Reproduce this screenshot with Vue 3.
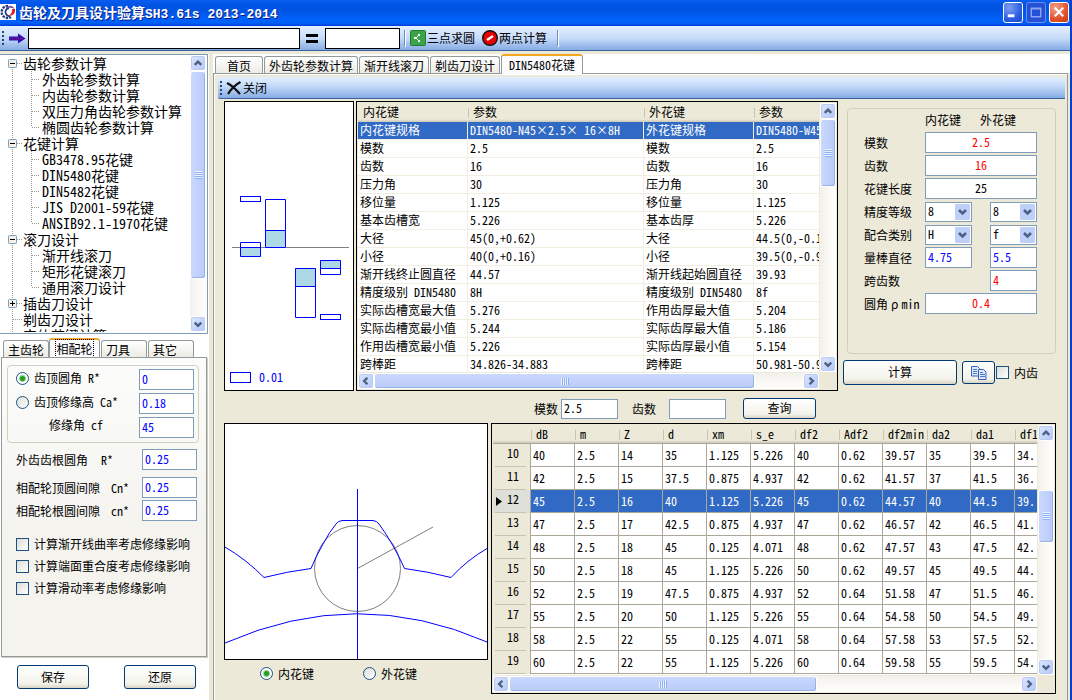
<script setup>
import { h, ref } from 'vue'

// 滚动条:before / size / after 为滑块前、滑块、滑块后的比例
const arrows = {
  up: 'M4 9.5 L7.5 6 L11 9.5',
  down: 'M4 6 L7.5 9.5 L11 6',
  left: 'M9 4 L5.5 7.5 L9 11',
  right: 'M6 4 L9.5 7.5 L6 11'
}

const ScrollButton = (props) => h('button', { class: 'sb-button', type: 'button', 'aria-label': props.to }, [
  h('svg', { viewBox: '0 0 15 15', width: 15, height: 15 }, [
    h('path', { d: arrows[props.to], fill: 'none', stroke: '#4d6185', 'stroke-width': 2.6 })
  ])
])
ScrollButton.props = ['to']

const ScrollBar = (props) => h('div', { class: ['sb', props.vertical ? 'sb-v' : 'sb-h'] }, [
  h(ScrollButton, { to: props.vertical ? 'up' : 'left' }),
  h('div', { class: 'sb-track' }, [
    h('span', { style: { flexGrow: props.before } }),
    h('span', { class: 'sb-thumb', style: { flexGrow: props.size } }, [h('i', { class: 'sb-grip' })]),
    h('span', { style: { flexGrow: props.after } })
  ]),
  h(ScrollButton, { to: props.vertical ? 'down' : 'right' })
])
ScrollBar.props = { vertical: Boolean, before: Number, size: Number, after: Number }

// 左侧导航树
const tree = [
  { name: '齿轮参数计算', sign: '-', items: ['外齿轮参数计算', '内齿轮参数计算', '双压力角齿轮参数计算', '椭圆齿轮参数计算'] },
  { name: '花键计算', sign: '-', items: ['GB3478.95花键', 'DIN5480花键', 'DIN5482花键', 'JIS D2001-59花键', 'ANSIB92.1-1970花键'] },
  { name: '滚刀设计', sign: '-', items: ['渐开线滚刀', '矩形花键滚刀', '通用滚刀设计'] },
  { name: '插齿刀设计', sign: '+', items: [] },
  { name: '剃齿刀设计', sign: '', items: [] },
  { name: '实体花键计算', sign: '', items: [] }
]

const sideTabs = ['主齿轮', '相配轮', '刀具', '其它']
const pageTabs = ['首页', '外齿轮参数计算', '渐开线滚刀', '剃齿刀设计', 'DIN5480花键']

const tipMode = ref('r')
const tip = ref({ r: '0', ca: '0.18', cf: '45' })
const clearances = ref([
  { id: 'root', label: '外齿齿根圆角', sym: 'R*', value: '0.25' },
  { id: 'top', label: '相配轮顶圆间隙', sym: 'Cn*', value: '0.25' },
  { id: 'bottom', label: '相配轮根圆间隙', sym: 'cn*', value: '0.25' }
])
const checks = ['计算渐开线曲率考虑修缘影响', '计算端面重合度考虑修缘影响', '计算滑动率考虑修缘影响']

const params = [
  ['内花键规格', 'DIN5480-N45×2.5× 16×8H', '外花键规格', 'DIN5480-W45×2.5× 16×8f'],
  ['模数', '2.5', '模数', '2.5'],
  ['齿数', '16', '齿数', '16'],
  ['压力角', '30', '压力角', '30'],
  ['移位量', '1.125', '移位量', '1.125'],
  ['基本齿槽宽', '5.226', '基本齿厚', '5.226'],
  ['大径', '45(0,+0.62)', '大径', '44.5(0,-0.16)'],
  ['小径', '40(0,+0.16)', '小径', '39.5(0,-0.95)'],
  ['渐开线终止圆直径', '44.57', '渐开线起始圆直径', '39.93'],
  ['精度级别 DIN5480', '8H', '精度级别 DIN5480', '8f'],
  ['实际齿槽宽最大值', '5.276', '作用齿厚最大值', '5.204'],
  ['实际齿槽宽最小值', '5.244', '实际齿厚最大值', '5.186'],
  ['作用齿槽宽最小值', '5.226', '实际齿厚最小值', '5.154'],
  ['跨棒距', '34.826-34.883', '跨棒距', '50.981-50.935']
]

const columns = ['dB', 'm', 'Z', 'd', 'xm', 's_e', 'df2', 'Adf2', 'df2min', 'da2', 'da1', 'df1']
const splines = [
  [10, '40', '2.5', '14', '35', '1.125', '5.226', '40', '0.62', '39.57', '35', '39.5', '34.'],
  [11, '42', '2.5', '15', '37.5', '0.875', '4.937', '42', '0.62', '41.57', '37', '41.5', '36.'],
  [12, '45', '2.5', '16', '40', '1.125', '5.226', '45', '0.62', '44.57', '40', '44.5', '39.'],
  [13, '47', '2.5', '17', '42.5', '0.875', '4.937', '47', '0.62', '46.57', '42', '46.5', '41.'],
  [14, '48', '2.5', '18', '45', '0.125', '4.071', '48', '0.62', '47.57', '43', '47.5', '42.'],
  [15, '50', '2.5', '18', '45', '1.125', '5.226', '50', '0.62', '49.57', '45', '49.5', '44.'],
  [16, '52', '2.5', '19', '47.5', '0.875', '4.937', '52', '0.64', '51.58', '47', '51.5', '46.'],
  [17, '55', '2.5', '20', '50', '1.125', '5.226', '55', '0.64', '54.58', '50', '54.5', '49.'],
  [18, '58', '2.5', '22', '55', '0.125', '4.071', '58', '0.64', '57.58', '53', '57.5', '52.'],
  [19, '60', '2.5', '22', '55', '1.125', '5.226', '60', '0.64', '59.58', '55', '59.5', '54.']
]
const selected = ref(12)

const form = ref({ m: '2.5', z: '16', len: '25', gradeIn: '8', gradeOut: '8', fitIn: 'H', fitOut: 'f', pinIn: '4.75', pinOut: '5.5', span: '4', rho: '0.4' })
const query = ref({ m: '2.5', z: '' })
const view = ref('in')
</script>

<template>
  <div class="window">
    <header class="titlebar">
      <svg class="logo" viewBox="0 0 16 16">
        <rect width="16" height="16" fill="#fff" />
        <path d="M8 2 A6 6 0 1 0 11 13" fill="none" stroke="#1d3f86" stroke-width="2.4" stroke-dasharray="2.4 1" />
        <path d="M9 4 A4 4 0 1 0 10 12" fill="none" stroke="#1d3f86" stroke-width="1.8" />
        <path d="M6 4 Q11 -1 15 5 Q11 3 6 4 Z" fill="#7a4a9c" />
        <path d="M15 5 Q16 12 8 12 Q13 9 12 5 Z" fill="#d8232a" />
      </svg>
      <h1>齿轮及刀具设计验算<span>SH3.61s 2013-2014</span></h1>
      <button class="win-btn" type="button" aria-label="最小化">
        <svg viewBox="0 0 19 19"><rect x="4" y="12" width="7" height="3" fill="#fff" /></svg>
      </button>
      <button class="win-btn dim" type="button" aria-label="最大化">
        <svg viewBox="0 0 19 19"><path d="M4.5 5.5 h10 v9 h-10 Z M4 6 h11" fill="none" stroke="#8ba4ec" stroke-width="1.5" /></svg>
      </button>
      <button class="win-btn close" type="button" aria-label="关闭窗口">
        <svg viewBox="0 0 19 19"><path d="M5 5 L14 14 M14 5 L5 14" stroke="#fff" stroke-width="2.2" /></svg>
      </button>
    </header>

    <div class="toolbar">
      <i class="grip"></i>
      <svg class="go" viewBox="0 0 17 11">
        <path d="M0 3.5 H9 V0.5 L16.5 5.5 L9 10.5 V7.5 H0 Z" fill="#2a10b8" />
        <path d="M1 5.5 H14" stroke="#9c1060" stroke-width="2" stroke-dasharray="1 1" />
      </svg>
      <input class="expr" type="text" aria-label="表达式">
      <svg class="equal" viewBox="0 0 12 9"><path d="M0 1.5 H12 M0 7.5 H12" stroke="#000" stroke-width="3" /></svg>
      <input class="result" type="text" aria-label="结果">
      <i class="sep"></i>
      <button class="tool" type="button">
        <svg viewBox="0 0 16 16">
          <rect x="0.5" y="0.5" width="15" height="15" rx="1" fill="#3ba44a" stroke="#237a31" />
          <path d="M4 7 h3 v2 h-3 Z M8 4 h2 v2 h-2 Z M8 10 h2 v2 h-2 Z M7 6 h1 v1 h-1 Z M7 9 h1 v1 h-1 Z" fill="#fff" />
        </svg>三点求圆
      </button>
      <button class="tool" type="button">
        <svg viewBox="0 0 16 16">
          <circle cx="8" cy="8" r="7.3" fill="#e80000" stroke="#111" stroke-width="1.4" />
          <path d="M5 10 L11 6" stroke="#fff" stroke-width="2.5" />
        </svg>两点计算
      </button>
      <i class="sep"></i>
    </div>

    <div class="body">
      <aside class="side">
        <nav class="tree">
          <ul>
            <template v-for="(group, g) in tree" :key="group.name">
              <li class="branch">
                <span class="gutter" :class="{ first: g === 0 }">
                  <button v-if="group.sign" type="button" :aria-label="group.name">
                    <svg viewBox="0 0 9 9">
                      <rect x="0.5" y="0.5" width="8" height="8" rx="1" fill="#f4f2ec" stroke="#7f9db9" />
                      <path :d="group.sign === '+' ? 'M2 4.5 H7 M4.5 2 V7' : 'M2 4.5 H7'" stroke="#000" />
                    </svg>
                  </button>
                </span>{{ group.name }}
              </li>
              <li v-for="(item, i) in group.items" :key="item" class="twig">
                <span class="gutter" :class="{ last: i === group.items.length - 1 }"></span>{{ item }}
              </li>
            </template>
          </ul>
          <ScrollBar vertical :before="0" :size="205" :after="37" />
        </nav>

        <div class="side-tabs">
          <button v-for="(tab, i) in sideTabs" :key="tab" type="button" class="tab" :class="{ active: i === 1 }"><span>{{ tab }}</span></button>
        </div>
        <section class="side-page">
          <div class="tip-box">
            <label class="pick"><input v-model="tipMode" type="radio" value="r">齿顶圆角 R*</label>
            <input v-model="tip.r" type="text" aria-label="齿顶圆角">
            <label class="pick"><input v-model="tipMode" type="radio" value="ca">齿顶修缘高 Ca*</label>
            <input v-model="tip.ca" type="text" aria-label="齿顶修缘高">
            <label class="indent" for="cf">修缘角 cf</label>
            <input id="cf" v-model="tip.cf" type="text">
          </div>
          <div class="clearances">
            <div v-for="c in clearances" :key="c.id" class="clearance" :class="c.id">
              <label :for="c.id">{{ c.label }}</label>
              <span>{{ c.sym }}</span>
              <input :id="c.id" v-model="c.value" type="text">
            </div>
          </div>
          <div class="checks">
            <label v-for="c in checks" :key="c"><input type="checkbox">{{ c }}</label>
          </div>
        </section>
        <div class="side-actions">
          <button class="btn" type="button">保存</button>
          <button class="btn" type="button">还原</button>
        </div>
      </aside>

      <main class="main">
        <div class="page-tabs">
          <button v-for="(tab, i) in pageTabs" :key="tab" type="button" class="tab" :class="{ active: i === 4 }"><span>{{ tab }}</span></button>
        </div>
        <div class="page">
          <div class="page-bar">
            <i class="grip"></i>
            <button class="tool" type="button">
              <svg viewBox="0 0 16 16"><path d="M1 3 Q7 6 14 14 M14.5 2 Q7 6 2 14" fill="none" stroke="#111" stroke-width="2.2" /></svg>关闭
            </button>
          </div>

          <div class="upper">
            <svg class="canvas zones" viewBox="0 0 128 288">
              <path d="M7 145.500 H124" stroke="#808080" />
              <g fill="#add8e6">
                <rect x="40" y="128" width="21" height="18" />
                <rect x="15" y="145" width="21" height="10" />
                <rect x="70" y="166" width="21" height="19" />
                <rect x="95" y="158" width="21" height="9" />
              </g>
              <g fill="none" stroke="#0000ff">
                <rect x="15.5" y="94.5" width="20" height="5" />
                <path d="M40.5 97.5 h20 v48 h-20 Z M40.5 128.5 h20" />
                <path d="M15.5 140.5 h20 v14 h-20 Z M15.5 145.5 h20" />
                <path d="M70.5 166.5 h20 v49 h-20 Z M70.5 184.5 h20" />
                <path d="M95.5 158.5 h20 v14 h-20 Z M95.5 166.5 h20" />
                <rect x="95.5" y="212.5" width="20" height="5" />
                <rect x="5.5" y="270.5" width="20" height="10" />
              </g>
              <text x="34" y="280">0.01</text>
            </svg>

            <div class="grid param-grid">
              <div class="viewport">
                <table>
                  <colgroup><col class="name"><col class="value"><col class="name"><col class="value"></colgroup>
                  <thead><tr><th>内花键</th><th>参数</th><th>外花键</th><th>参数</th></tr></thead>
                  <tbody>
                    <tr v-for="(row, r) in params" :key="r" :class="{ on: r === 0 }">
                      <td v-for="(cell, i) in row" :key="i">{{ cell }}</td>
                    </tr>
                  </tbody>
                </table>
              </div>
              <ScrollBar vertical :before="0" :size="66" :after="170" />
              <ScrollBar :before="0" :size="382" :after="48" />
            </div>

            <div class="inputs">
              <div class="form">
                <div class="head"><span>内花键</span><span>外花键</span></div>
                <label for="f-m">模数</label><input id="f-m" v-model="form.m" class="wide red" type="text">
                <label for="f-z">齿数</label><input id="f-z" v-model="form.z" class="wide red" type="text">
                <label for="f-len">花键长度</label><input id="f-len" v-model="form.len" class="wide black" type="text">
                <label for="f-grade">精度等级</label>
                <span class="combo">
                  <select id="f-grade" v-model="form.gradeIn"><option>7</option><option>8</option></select>
                  <svg viewBox="0 0 15 16"><rect width="15" height="16" rx="1" /><path d="M4 6 L7.5 9.5 L11 6" /></svg>
                </span>
                <span class="combo out">
                  <select v-model="form.gradeOut" aria-label="外花键精度等级"><option>7</option><option>8</option></select>
                  <svg viewBox="0 0 15 16"><rect width="15" height="16" rx="1" /><path d="M4 6 L7.5 9.5 L11 6" /></svg>
                </span>
                <label for="f-fit">配合类别</label>
                <span class="combo">
                  <select id="f-fit" v-model="form.fitIn"><option>H</option><option>G</option></select>
                  <svg viewBox="0 0 15 16"><rect width="15" height="16" rx="1" /><path d="M4 6 L7.5 9.5 L11 6" /></svg>
                </span>
                <span class="combo out">
                  <select v-model="form.fitOut" aria-label="外花键配合类别"><option>f</option><option>h</option></select>
                  <svg viewBox="0 0 15 16"><rect width="15" height="16" rx="1" /><path d="M4 6 L7.5 9.5 L11 6" /></svg>
                </span>
                <label for="f-pin">量棒直径</label><input id="f-pin" v-model="form.pinIn" type="text">
                <input v-model="form.pinOut" class="out" type="text" aria-label="外花键量棒直径">
                <label for="f-span">跨齿数</label><input id="f-span" v-model="form.span" class="out red" type="text">
                <label for="f-rho">圆角<i class="rho">ρ</i>min</label><input id="f-rho" v-model="form.rho" class="wide red" type="text">
              </div>
              <div class="form-actions">
                <button class="btn calc" type="button">计算</button>
                <button class="btn copy" type="button" aria-label="复制">
                  <svg viewBox="0 0 16 14">
                    <g stroke="#3a62b8" fill="#dbe8fb">
                      <path d="M0.5 0.5 h6 l2 2 v7.5 h-8 Z" />
                      <path d="M7.5 3.5 h5 l2.5 2.5 v7.5 h-7.5 Z" />
                    </g>
                    <path d="M2 3.5 h4 M2 5.5 h4 M2 7.5 h4 M9 6.5 h3 M9 8.5 h5 M9 10.5 h5" stroke="#4a78cc" />
                  </svg>
                </button>
                <label><input type="checkbox">内齿</label>
              </div>
            </div>
          </div>

          <div class="query">
            <label for="q-m">模数</label><input id="q-m" v-model="query.m" type="text">
            <label for="q-z">齿数</label><input id="q-z" v-model="query.z" type="text">
            <button class="btn" type="button">查询</button>
          </div>

          <div class="lower">
            <div class="profile">
              <svg class="canvas" viewBox="0 0 262 235" preserveAspectRatio="none">
                <g fill="none" stroke="#808080">
                  <circle cx="132.5" cy="144.5" r="43" />
                  <path d="M132.5 144.5 L208 103" />
                </g>
                <g fill="none" stroke="#0000ff">
                  <path d="M0 123 Q22 136 39 153.5 Q62 147.5 86 144.5 Q90 134 98 120 Q105 107 111 100 Q113 97 117 96.5 H148 Q152 97 154 100 Q160 108 167 120 Q174 132 179.5 144.5 Q203 147.5 226 153.5 Q242 136 262 124.5" />
                  <path d="M0 219 Q132 161 262 218" />
                </g>
                <path d="M132.5 65 V235" stroke="#0000ff" />
              </svg>
              <div class="views">
                <label><input v-model="view" type="radio" value="in">内花键</label>
                <label><input v-model="view" type="radio" value="out">外花键</label>
              </div>
            </div>

            <div class="grid spline-grid">
              <div class="viewport">
                <table>
                  <colgroup><col class="no"><col v-for="c in columns" :key="c" class="num"></colgroup>
                  <thead><tr><th></th><th v-for="c in columns" :key="c">{{ c }}</th></tr></thead>
                  <tbody>
                    <tr v-for="row in splines" :key="row[0]" :class="{ on: row[0] === selected }" @click="selected = row[0]">
                      <th scope="row"><div><svg viewBox="0 0 6 9"><path v-if="row[0] === selected" d="M0 0 L6 4.5 L0 9 Z" /></svg>{{ row[0] }}</div></th>
                      <td v-for="(cell, i) in row.slice(1)" :key="i">{{ cell }}</td>
                    </tr>
                  </tbody>
                </table>
              </div>
              <ScrollBar vertical :before="49" :size="51" :after="117" />
              <ScrollBar :before="0" :size="307" :after="205" />
            </div>
          </div>
        </div>
      </main>
    </div>
  </div>
</template>

<style>
body {
  margin: 0;
}

/* 滚动条 */
.sb {
  display: flex;
  background: linear-gradient(90deg, #f3f1ec, #fefefb);
}

.sb-v {
  flex-direction: column;
  width: 16px;
}

.sb-h {
  height: 16px;
  background: linear-gradient(#f3f1ec, #fefefb);
}

.sb-button {
  display: block;
  flex: none;
  width: 16px;
  height: 16px;
  padding: 0;
  border: 1px solid #fff;
  border-radius: 3px;
  background: linear-gradient(135deg, #dce6fe, #b4c8f6);
  box-shadow: inset 0 0 0 1px #b9cbf3;
}

.sb-button svg {
  display: block;
  width: 14px;
  height: 14px;
}

.sb-track {
  display: flex;
  flex: 1;
}

.sb-v .sb-track {
  flex-direction: column;
}

.sb-track > span {
  flex-basis: 0;
}

.sb-thumb {
  display: flex;
  align-items: center;
  justify-content: center;
  box-sizing: border-box;
  border: 1px solid #fff;
  border-radius: 3px;
  background: linear-gradient(90deg, #cad8fd, #b9cbf9);
  box-shadow: inset -1px -1px 0 #98b1e4;
}

.sb-h .sb-thumb {
  background: linear-gradient(#cad8fd, #b9cbf9);
}

.sb-grip {
  width: 7px;
  height: 8px;
  background: repeating-linear-gradient(#eef4fe 0 1px, #8cb0f8 1px 2px);
}

.sb-h .sb-grip {
  width: 8px;
  height: 7px;
  background: repeating-linear-gradient(90deg, #eef4fe 0 1px, #8cb0f8 1px 2px);
}
</style>

<style scoped>
.window {
  display: flex;
  flex-direction: column;
  box-sizing: border-box;
  height: 100vh;
  overflow: hidden;
  border-right: 2px solid #0841c8;
  background: #ece9d8;
  color: #000;
  font: 12px/16px "Noto Sans Mono CJK SC", "Noto Sans CJK SC", monospace;
}

button,
input,
select {
  box-sizing: border-box;
  margin: 0;
  color: inherit;
  font: inherit;
}

input[type="text"] {
  padding: 0 2px 3px;
  border: 1px solid #7f9db9;
  border-radius: 0;
  outline: 0;
  background: #fff;
  color: #0000ff;
}

/* 标题栏 */
.titlebar {
  display: flex;
  align-items: center;
  gap: 3px;
  height: 26px;
  padding: 0 1px 2px 0;
  box-sizing: border-box;
  background: linear-gradient(#0a5cf0, #0054e3 20%, #0055e5 45%, #0062fc 75%, #0061f8 88%, #003dd7);
}

.logo {
  width: 16px;
  height: 16px;
}

h1 {
  flex: 1;
  margin: 0;
  color: #fff;
  font-size: 14px;
  line-height: 20px;
  text-shadow: 1px 1px #0a1883;
}

h1 span {
  font: bold 13px "Liberation Mono", monospace;
}

.win-btn {
  width: 20px;
  height: 21px;
  padding: 0;
  border: 1px solid #fff;
  border-radius: 3px;
  background: radial-gradient(circle at 30% 25%, #7c9ff0, #2b5fe0 60%, #1a46c8);
}

.win-btn svg {
  display: block;
}

.win-btn.dim {
  border-color: #6f8fea;
  background: #2450d8;
}

.win-btn.close {
  background: radial-gradient(circle at 30% 25%, #f0a088, #e2532c 60%, #c83a10);
}

/* 工具条 */
.toolbar {
  display: flex;
  flex: none;
  align-items: center;
  height: 25px;
  margin-bottom: 3px;
  box-sizing: border-box;
  border-bottom: 1px solid #3b619c;
  background: linear-gradient(#e3efff, #c7dcfa 50%, #86abe4);
}

.grip {
  width: 2px;
  height: 14px;
  margin: 0 2px;
  background: repeating-linear-gradient(#274176 0 2px, transparent 2px 4px);
}

.go {
  width: 17px;
  height: 11px;
  margin: 0 2px 0 3px;
}

.toolbar .expr,
.toolbar .result {
  height: 21px;
  border-color: #000;
  color: #000;
}

.expr {
  width: 272px;
}

.result {
  width: 75px;
}

.equal {
  width: 12px;
  height: 9px;
  margin: 0 7px 0 6px;
}

.sep {
  width: 1px;
  height: 16px;
  margin: 0 4px;
  background: #6a8ccb;
  box-shadow: 1px 1px #fff;
}

.tool {
  display: flex;
  align-items: center;
  gap: 1px;
  height: 20px;
  margin-right: 5px;
  padding: 0 1px;
  border: 0;
  background: none;
}

.tool svg {
  width: 16px;
  height: 16px;
}

.body {
  display: flex;
  flex: 1;
  min-height: 0;
}

/* 左侧 */
.side {
  display: flex;
  flex: none;
  flex-direction: column;
  width: 209px;
  background: #fff;
}

.tree {
  display: flex;
  flex: 1;
  min-height: 0;
  margin-right: 1px;
  padding: 0 1px 1px 0;
  border: 1px solid #7f9db9;
  border-left: 0;
}

.tree ul {
  flex: 1;
  margin: 0;
  padding: 0;
  overflow: hidden;
  font-size: 14px;
  line-height: 16px;
  list-style: none;
  white-space: nowrap;
}

.tree li {
  display: flex;
  height: 16px;
}

.gutter {
  flex: none;
  width: 23px;
  background:
    repeating-linear-gradient(#a09c88 0 1px, transparent 1px 2px) 12px 0 / 1px 100% no-repeat,
    repeating-linear-gradient(90deg, #a09c88 0 1px, transparent 1px 2px) 13px 8px / 9px 1px no-repeat;
}

.gutter.first {
  background-position: 12px 8px, 13px 8px;
}

.gutter button {
  display: block;
  width: 9px;
  height: 9px;
  margin: 4px 0 0 8px;
  padding: 0;
  border: 0;
}

.gutter svg {
  display: block;
}

.twig .gutter {
  width: 42px;
  background:
    repeating-linear-gradient(#a09c88 0 1px, transparent 1px 2px) 12px 0 / 1px 100% no-repeat,
    repeating-linear-gradient(#a09c88 0 1px, transparent 1px 2px) 31px 0 / 1px 100% no-repeat,
    repeating-linear-gradient(90deg, #a09c88 0 1px, transparent 1px 2px) 32px 8px / 8px 1px no-repeat;
}

.twig .gutter.last {
  background-size: 1px 100%, 1px 8px, 8px 1px;
}

.tab {
  height: 17px;
  margin-right: 1px;
  padding: 0 4px;
  border: 1px solid #919b9c;
  border-bottom: 0;
  border-radius: 3px 3px 0 0;
  background: linear-gradient(#fff, #ecebe5);
  line-height: 15px;
  white-space: nowrap;
}

.tab.active {
  height: 20px;
  margin-bottom: -1px;
  padding-bottom: 2px;
  border-top: 2px solid #f5a623;
  background: #fcfcfe;
}

.side-tabs {
  display: flex;
  flex: none;
  align-items: flex-end;
  height: 23px;
  padding: 0 3px;
}

.side-tabs .tab {
  width: 46px;
  text-align: left;
}

.side-tabs .tab.active {
  width: 51px;
  margin-left: -1px;
  text-align: center;
}

.side-tabs .active span {
  outline: 1px dotted #000;
}

.side-page {
  flex: none;
  height: 300px;
  margin: 0 2px 0 1px;
  padding: 7px 7px 7px 5px;
  box-sizing: border-box;
  border: 1px solid #919b9c;
  background: linear-gradient(#fcfcfb, #f4f3ee 60%);
  box-shadow: 1px 1px #d0cebf;
}

.side-page input[type="text"] {
  width: 55px;
  height: 21px;
}

.tip-box {
  display: grid;
  grid-template-columns: 1fr 55px;
  gap: 3px;
  padding: 3px 4px 4px 8px;
  border: 1px solid #d0d0bf;
  border-radius: 4px;
}

.pick {
  display: flex;
  align-items: center;
  gap: 5px;
  height: 18px;
  white-space: nowrap;
}

.indent {
  padding-left: 33px;
}

.clearance {
  display: grid;
  grid-template-columns: 84px 1fr 55px;
  align-items: center;
  height: 23px;
  padding: 0 2px 0 9px;
  white-space: nowrap;
}

.clearance span {
  padding-left: 11px;
}

.clearance.root {
  margin: 5px 0;
}

.clearance.root span {
  padding-left: 1px;
}

.checks {
  display: grid;
  gap: 6px;
  padding: 14px 0 0 9px;
}

label input[type="radio"],
label input[type="checkbox"] {
  flex: none;
  width: 13px;
  height: 13px;
  border: 1px solid #1c5180;
  background: linear-gradient(135deg, #dcdcd7, #fff);
  appearance: none;
}

label input[type="radio"] {
  border-radius: 50%;
}

label input[type="radio"]:checked {
  background: radial-gradient(circle, #21a121 0 2px, #fff 4px);
}

.checks label,
.views label,
.form-actions label {
  display: flex;
  align-items: center;
  gap: 5px;
  white-space: nowrap;
}

.btn {
  padding: 0 0 1px;
  border: 1px solid #003c74;
  border-radius: 3px;
  background: linear-gradient(#fff, #f3f2ea 80%, #d9d3c5);
}

.side-actions {
  display: flex;
  flex: none;
  justify-content: space-between;
  padding: 8px 13px 11px 17px;
}

.side-actions .btn {
  width: 72px;
  height: 24px;
}

/* 主区域 */
.main {
  display: flex;
  flex: 1;
  flex-direction: column;
  min-width: 0;
  margin-left: 4px;
}

.page-tabs {
  display: flex;
  flex: none;
  align-items: flex-end;
  height: 19px;
  padding-left: 2px;
  background: #fff;
}

.page-tabs .tab:first-child {
  padding: 0 11px;
}

.page-tabs .tab.active {
  z-index: 1;
  padding: 0 7px 2px;
}

.page {
  display: flex;
  flex: 1;
  flex-direction: column;
  min-height: 0;
  margin-right: 2px;
  padding: 3px 2px 6px 4px;
  border: 1px solid #919b9c;
  border-bottom: 0;
  box-shadow: inset 1px 1px #fff;
}

.page-bar {
  display: flex;
  flex: none;
  align-items: center;
  height: 22px;
  box-sizing: border-box;
  border-bottom: 1px solid #3b619c;
  border-radius: 2px 2px 0 2px;
  background: linear-gradient(#e3efff, #c7dcfa 40%, #86abe4);
}

.page-bar .tool {
  padding-left: 2px;
}

.upper {
  display: flex;
  flex: none;
  gap: 2px;
  height: 290px;
  padding: 2px 7px 0 6px;
}

.canvas {
  box-sizing: border-box;
  border: 1px solid #000;
  background: #fff;
}

.zones {
  flex: none;
  width: 130px;
  height: 290px;
}

.zones text {
  fill: #0000ff;
  font-size: 12px;
}

.grid {
  display: grid;
  flex: 1;
  grid-template: minmax(0, 1fr) 16px / minmax(0, 1fr) 16px;
  gap: 1px;
  box-sizing: border-box;
  min-width: 0;
  padding: 1px;
  border: 1px solid #000;
}

.grid .viewport {
  overflow: hidden;
  background: #fff;
}

.grid table {
  border-collapse: separate;
  border-spacing: 0;
  line-height: 15px;
  table-layout: fixed;
  white-space: nowrap;
}

.grid th,
.grid td {
  box-sizing: border-box;
}

.grid th {
  padding: 0 5px 2px;
  background: linear-gradient(#ece9d8 85%, #cbc7b8);
  font-weight: normal;
  text-align: left;
}

.grid td {
  padding: 0 2px 2px;
  overflow: hidden;
}

.grid thead th + th {
  background:
    linear-gradient(#c7c5b2, #c7c5b2) 0 5px / 1px 10px no-repeat,
    linear-gradient(#ece9d8 85%, #cbc7b8);
}

.grid .on td {
  background: #316ac5;
  color: #fff;
}

.param-grid table {
  width: 572px;
}

.param-grid .name {
  width: 110px;
}

.param-grid .value {
  width: 176px;
}

.param-grid thead th {
  height: 19px;
  padding-bottom: 3px;
}

.param-grid td {
  height: 18px;
  border-right: 1px solid #f1efe2;
  border-bottom: 1px solid #f1efe2;
}

/* 右侧输入 */
.inputs {
  flex: none;
  width: 215px;
  padding-left: 3px;
}

.form {
  display: grid;
  grid-template-columns: 43px 47px 47px;
  grid-template-rows: 22px;
  grid-auto-rows: 23px;
  column-gap: 18px;
  align-items: center;
  height: 246px;
  margin: 7px 2px 0 4px;
  padding: 0 0 0 16px;
  box-sizing: border-box;
  border: 1px solid #d0d0bf;
  border-radius: 4px;
}

.form label {
  white-space: nowrap;
}

.rho {
  padding: 0 3px;
  font-style: normal;
}

.head {
  display: flex;
  grid-column: 2 / 4;
  gap: 19px;
}

.form input {
  grid-column: 2;
  width: 100%;
  height: 21px;
}

.form .wide {
  grid-column: 2 / 4;
  text-align: center;
}

.form .out {
  grid-column: 3;
}

.form .red {
  color: #ff0000;
}

.form .black {
  color: #000;
}

.combo {
  display: grid;
  align-items: center;
}

.combo select {
  grid-area: 1 / 1;
  width: 100%;
  height: 20px;
  padding: 0 2px 1px;
  border: 1px solid #7f9db9;
  border-radius: 0;
  background: #fff;
  appearance: none;
}

.combo svg {
  grid-area: 1 / 1;
  justify-self: end;
  width: 15px;
  height: 16px;
  margin-right: 2px;
  pointer-events: none;
}

.combo rect {
  fill: #bfd0f8;
}

.combo path {
  fill: none;
  stroke: #4d6185;
  stroke-width: 2.6;
}

.form-actions {
  display: flex;
  align-items: center;
  padding-top: 6px;
}

.calc {
  width: 114px;
  height: 25px;
  margin-right: 5px;
}

.copy {
  width: 33px;
  height: 23px;
  margin-right: 1px;
}

.copy svg {
  width: 16px;
  height: 14px;
  vertical-align: middle;
}

.query {
  display: flex;
  flex: none;
  align-items: center;
  height: 21px;
  padding: 7px 0 4px 316px;
}

.query input {
  width: 57px;
  height: 20px;
  margin: 0 14px 0 3px;
}

.query #q-m {
  color: #000;
}

.query #q-z {
  margin: 0 17px 0 13px;
}

.query .btn {
  width: 73px;
  height: 21px;
}

.lower {
  display: flex;
  flex: 1;
  gap: 3px;
  min-height: 0;
  padding: 0 9px 0 6px;
}

.profile {
  display: flex;
  flex: none;
  flex-direction: column;
  width: 264px;
}

.profile .canvas {
  flex: 1;
  width: 100%;
  min-height: 0;
}

.views {
  display: flex;
  gap: 49px;
  height: 27px;
  padding: 0 0 7px 36px;
}

.spline-grid table {
  width: 566px;
}

.spline-grid .no {
  width: 38px;
}

.spline-grid .num {
  width: 44px;
}

.spline-grid thead th {
  height: 19px;
  border-bottom: 1px solid #aca899;
}

.spline-grid tbody th {
  height: 23px;
  padding: 0 4px 0 2px;
  border-right: 1px solid #aca899;
  background: #ece9d8;
}

.spline-grid tbody th div {
  display: flex;
  gap: 5px;
  height: 22px;
  border-bottom: 1px solid #c7c5b2;
  box-sizing: border-box;
}

.spline-grid tbody th svg {
  width: 6px;
  height: 9px;
  margin: 6px 0 0 1px;
}

.spline-grid td {
  height: 23px;
  border-right: 1px solid #aca899;
  border-bottom: 1px solid #aca899;
}

.spline-grid .on th {
  background: #dedfd8;
}
</style>
